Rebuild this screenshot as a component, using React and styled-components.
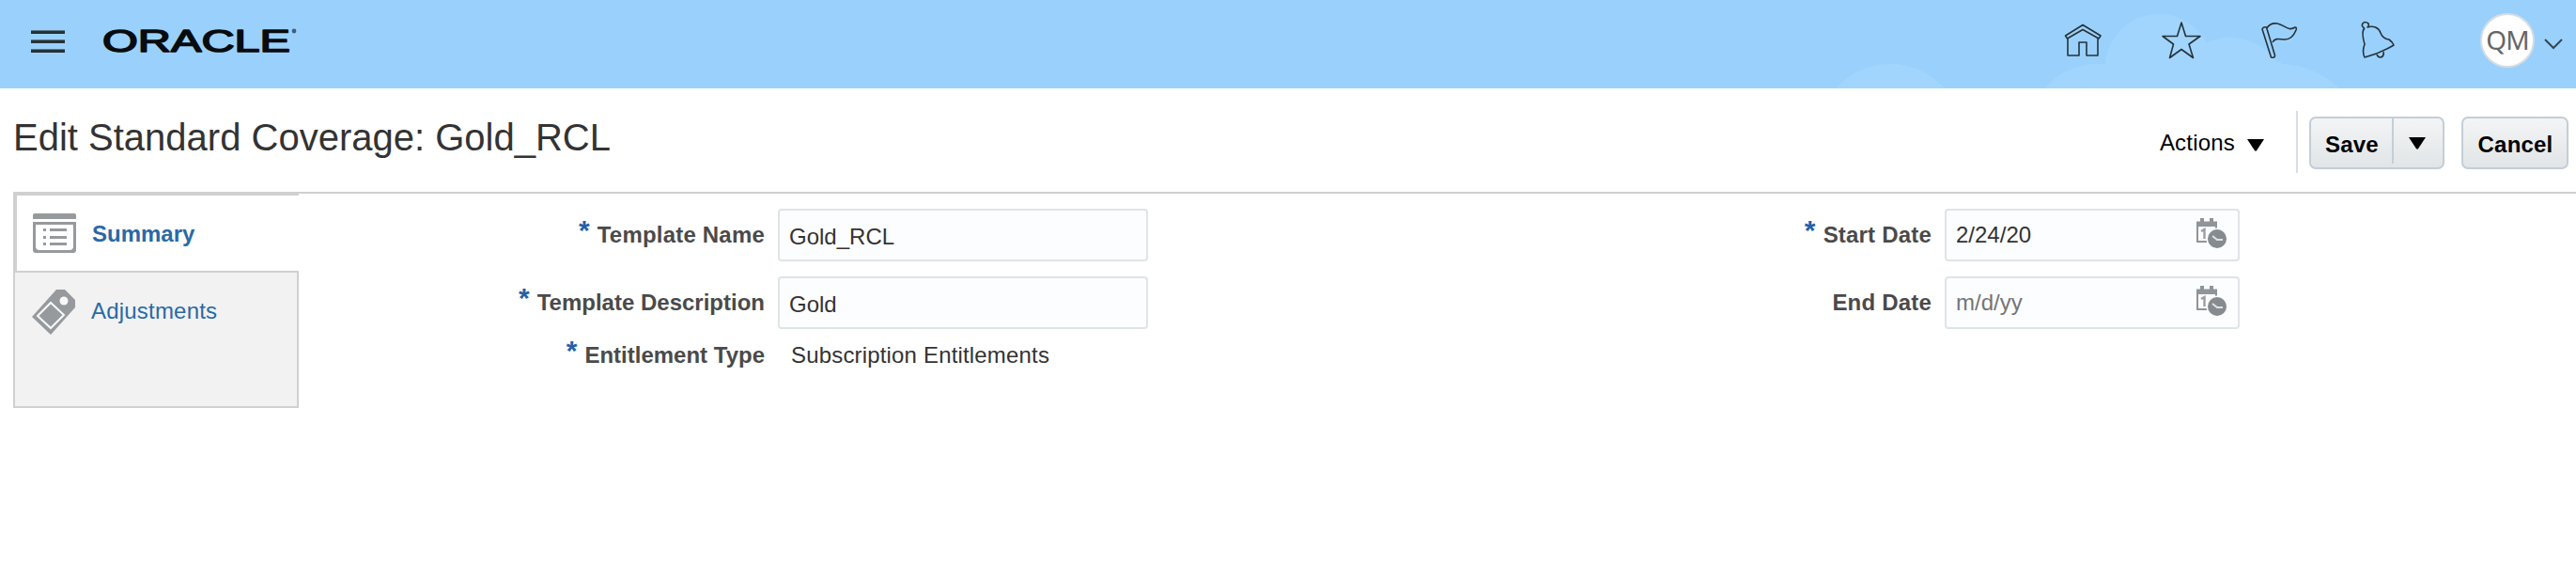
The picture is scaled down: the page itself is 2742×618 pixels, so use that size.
import React from "react";
import styled, { createGlobalStyle } from "styled-components";

const GlobalStyle = createGlobalStyle`
  * { box-sizing: border-box; }
  body {
    margin: 0;
    background: #fff;
    font-family: "Liberation Sans", Arial, sans-serif;
    font-size: 24px;
    color: #333;
  }
`;

const Page = styled.div`
  height: 618px;
  overflow: hidden;
`;

const TopBar = styled.header`
  position: relative;
  height: 94px;
  display: flex;
  align-items: flex-start;
  background: #9ad1fc;
  overflow: hidden;
`;

const Clouds = styled.svg`
  position: absolute;
  left: 1900px;
  top: 0;
`;

const MenuButton = styled.button`
  margin: 32px 0 0 33px;
  padding: 0;
  width: 36px;
  height: 24px;
  border: 0;
  background: none;
  display: flex;
  flex-direction: column;
  justify-content: space-between;
`;

const MenuLine = styled.span`
  width: 36px;
  height: 4px;
  background: #283136;
  border-top: 1px solid #587585;
`;

const Logo = styled.svg`
  margin: 24px 0 0 39px;
  flex: none;
`;

const IconBar = styled.nav`
  margin-left: auto;
  display: flex;
  align-items: flex-start;
  position: relative;
`;

const IconSlot = styled.svg`
  width: 44px;
  height: 44px;
  margin: 20px 60px 0 0;
  fill: none;
  stroke: #263238;
  stroke-width: 1.6;
  stroke-linejoin: round;
`;

const Avatar = styled.div`
  width: 58px;
  height: 58px;
  margin: 14px 10px 0 29px;
  border: 2px solid #d5dde3;
  border-radius: 50%;
  background: #fff;
  color: #666;
  font: 28px/53px "Noto Sans", "Open Sans", sans-serif;
  letter-spacing: -1px;
  text-align: center;
`;

const Chevron = styled.svg`
  margin: 40px 14px 0 0;
`;

const TitleRow = styled.div`
  height: 110px;
  display: flex;
  align-items: flex-start;
`;

const Title = styled.h1`
  margin: 29px auto 0 14px;
  font-size: 40px;
  line-height: 46px;
  font-weight: 400;
  white-space: nowrap;
`;

const ActionsMenu = styled.div`
  display: flex;
  align-items: flex-start;
  height: 30px;
  line-height: 30px;
  margin: 43px 34px 0 0;
  color: #000;
  letter-spacing: 0.2px;
`;

const ActionsArrow = styled.span`
  padding: 11px 0 0 13px;
`;

const TriangleDown = styled.svg`
  display: block;
`;

const Separator = styled.div`
  width: 2px;
  height: 66px;
  margin: 24px 12px 0 0;
  background: #d6dfe6;
`;

const Button = styled.div`
  display: flex;
  height: 56px;
  width: ${(p) => p.$width}px;
  margin: 30px ${(p) => p.$after}px 0 0;
  border: 2px solid #c4ced7;
  border-radius: 7px;
  background: linear-gradient(#f3f4f5, #e1e5e7);
  color: #000;
  font-weight: 700;
  line-height: 55px;
  letter-spacing: 0.2px;
`;

const ButtonText = styled.span`
  flex: 1;
  padding-left: 1px;
  text-align: center;
`;

const ButtonArrow = styled.span`
  width: 54px;
  height: 48px;
  border-left: 2px solid #c4ced7;
  display: flex;
  justify-content: center;
  padding: 20px 2px 0 0;
`;

const Body = styled.main`
  display: flex;
  margin-left: 14px;
  border-top: 2px solid #d0d0d0;
`;

const SideTabs = styled.aside`
  width: 304px;
  height: 228px;
  border: 2px solid #d0d0d0;
  border-top: 0;
  border-right: 0;
  background: #f2f2f2;
  display: flex;
  flex-direction: column;
`;

const Tab = styled.div`
  display: flex;
  align-items: flex-start;
  height: ${(p) => (p.$active ? 82 : 144)}px;
  padding-left: ${(p) => (p.$active ? 17 : 18)}px;
  color: #2a69a5;
  font-weight: ${(p) => (p.$active ? 700 : 400)};
  letter-spacing: ${(p) => (p.$active ? 0 : 0.2)}px;
  background: ${(p) => (p.$active ? "#fff" : "#f2f2f2")};
  border-style: solid;
  border-color: #d0d0d0;
  border-width: ${(p) => (p.$active ? "2px 0 0 2px" : "2px 2px 0 0")};
`;

const TabIcon = styled.svg`
  margin: ${(p) => p.$top}px 17px 0 0;
  flex: none;
`;

const TabLabel = styled.span`
  line-height: 28px;
  margin-top: 27px;
`;

const FieldColumn = styled.section`
  width: ${(p) => p.$width}px;
  padding-top: 16px;
`;

const FieldRow = styled.div`
  display: flex;
  height: ${(p) => p.$height}px;
`;

const Label = styled.label`
  width: ${(p) => p.$width}px;
  display: flex;
  justify-content: flex-end;
  margin-top: ${(p) => p.$top}px;
  line-height: 28px;
  font-weight: 700;
  color: #4a4a4a;
  white-space: nowrap;
  letter-spacing: ${(p) => p.$spacing || 0}px;
`;

const Star = styled.span`
  color: #2360a8;
  font: 700 30px/28px "Liberation Sans", Arial, sans-serif;
  margin: -5px 8px 0 0;
`;

const Field = styled.div`
  width: ${(p) => p.$width}px;
  height: 56px;
  margin-left: 14px;
  display: flex;
  justify-content: space-between;
  border: 2px solid #dfe4e7;
  border-radius: 4px;
  background: #fcfdff;
  padding: ${(p) => p.$top}px 12px 0 10px;
  line-height: 28px;
  color: ${(p) => (p.$muted ? "#757575" : "#333")};
`;

const PlainValue = styled.div`
  margin: 0 0 0 28px;
  line-height: 28px;
  letter-spacing: 0.17px;
`;

const CalendarSvg = styled.svg`
  margin-top: -4px;
`;

const CalendarIcon = () => (
  <CalendarSvg width="32" height="32" viewBox="0 0 32 32">
    <path d="M0 3.500h4V0h4v3.500h6V0h4v3.500h4V9H0z" fill="#8f9498" />
    <path d="M1 9v16h10M21 9v3" fill="none" stroke="#8f9498" strokeWidth="2" />
    <path d="M5 14l3.500-2v10" fill="none" stroke="#9a9ea2" strokeWidth="2.4" />
    <circle cx="22" cy="22" r="11.500" fill="#fcfdff" />
    <circle cx="22" cy="22" r="10" fill="#868b90" />
    <path d="M17 19l5 4h6" fill="none" stroke="#dfe2e5" strokeWidth="2" />
  </CalendarSvg>
);

const Arrow = () => (
  <TriangleDown width="18" height="13" viewBox="0 0 18 13">
    <path d="M0 0h18L9.800 12.500H8.200z" fill="#000" />
  </TriangleDown>
);

const TextField = ({ label, value, height, spacing }) => (
  <FieldRow $height={height}>
    <Label $width={496} $top={14} $spacing={spacing}>
      <Star>*</Star>
      {label}
    </Label>
    <Field $width={394} $top={14}>{value}</Field>
  </FieldRow>
);

const DateField = ({ label, value, required, muted }) => (
  <FieldRow $height={72}>
    <Label $width={300} $top={14} $spacing={0.2}>
      {required && <Star>*</Star>}
      {label}
    </Label>
    <Field $width={314} $top={12} $muted={muted}>
      {value}
      <CalendarIcon />
    </Field>
  </FieldRow>
);

export default function App() {
  return (
    <Page>
      <GlobalStyle />
      <TopBar>
        <Clouds width="842" height="94" viewBox="0 0 842 94">
          <g fill="#a1d5fd">
            <circle cx="112" cy="145" r="77" />
            <circle cx="398" cy="72" r="57" />
            <circle cx="474" cy="101" r="61" />
            <circle cx="332" cy="140" r="72" />
            <circle cx="526" cy="160" r="92" />
            <path d="M343 66h185v28H320z" />
          </g>
        </Clouds>
        <MenuButton aria-label="Menu">
          <MenuLine />
          <MenuLine />
          <MenuLine />
        </MenuButton>
        <Logo width="212" height="40" viewBox="0 0 212 40">
          <text
            x="1"
            y="31"
            fontFamily="Liberation Sans, Arial, sans-serif"
            fontSize="34"
            textLength="200"
            lengthAdjust="spacingAndGlyphs"
            fill="#080c0f"
            stroke="#080c0f"
            strokeWidth="1.6"
            strokeLinejoin="round"
          >
            ORACLE
          </text>
          <circle cx="205" cy="9" r="2.4" fill="#3f6076" />
        </Logo>
        <IconBar>
          <IconSlot viewBox="0 0 44 44">
            <path d="M3.500 18L22 6.500 41 18l-2 3L22 11.500 5.500 21zM6 21v18h12V25h8v14h12V21" />
          </IconSlot>
          <IconSlot viewBox="0 0 44 44">
            <path d="M23 4l4.500 14.500H43L31 27l4.500 14.500L23 32.500 10.500 41.500 14.500 27 3 18.500h15.500z" />
          </IconSlot>
          <IconSlot viewBox="0 0 44 44">
            <path d="M5 11q1-3 4.500-2l9 30q0 3-4 2zM10 10q3-6 11-5c7 1 12 9 19 4q2 0 1 3-4 10-12 10c-8-1-11-1-13 3" />
          </IconSlot>
          <IconSlot viewBox="0 0 44 44">
            <path d="M10 10q-4-2-2-5t6 0q1 3-1 4c6-2 12 0 14 6q2 6 9 7 4 3 5 6-15 9-31 13-3-6 0-14Q6 13 10 10M23 38q1 3 4 3 4-1 3-6" />
          </IconSlot>
          <Avatar>QM</Avatar>
          <Chevron width="20" height="14" viewBox="0 0 20 14">
            <path d="M1 2l9 9 9-9" fill="none" stroke="#35464f" strokeWidth="2" />
          </Chevron>
        </IconBar>
      </TopBar>
      <TitleRow>
        <Title>Edit Standard Coverage: Gold_RCL</Title>
        <ActionsMenu>
          Actions
          <ActionsArrow>
            <Arrow />
          </ActionsArrow>
        </ActionsMenu>
        <Separator />
        <Button $width={144} $after={18}>
          <ButtonText>Save</ButtonText>
          <ButtonArrow>
            <Arrow />
          </ButtonArrow>
        </Button>
        <Button $width={114} $after={8}>
          <ButtonText>Cancel</ButtonText>
        </Button>
      </TitleRow>
      <Body>
        <SideTabs>
          <Tab $active>
            <TabIcon $top={19} width="46" height="42" viewBox="0 0 46 42">
              <g fill="#969a9d">
                <path d="M0 6V2q0-2 2-2h42q2 0 2 2v4z" />
                <path d="M0 9h46v30q0 3-3 3H3q-3 0-3-3zM3 12v23q0 4 4 4h32q4 0 4-4V12z" fillRule="evenodd" />
                <path d="M11 16h3v3h-3zM11 24h3v3h-3zM11 31h3v3h-3zM18 16h18v3H18zM18 24h18v3H18zM18 31h18v3H18z" />
              </g>
            </TabIcon>
            <TabLabel>Summary</TabLabel>
          </Tab>
          <Tab>
            <TabIcon $top={18} width="46" height="48" viewBox="0 0 46 48">
              <path d="M0 29L26 0h9l11 11v8L20 48z" fill="#969a9d" />
              <circle cx="34" cy="12" r="4.500" fill="#f8f8f8" />
              <path d="M6 28L20 14l14 13-14 14z" fill="none" stroke="#f8f8f8" strokeWidth="2" />
            </TabIcon>
            <TabLabel>Adjustments</TabLabel>
          </Tab>
        </SideTabs>
        <FieldColumn $width={1438}>
          <TextField label="Template Name" value="Gold_RCL" height={72} spacing={0.2} />
          <TextField label="Template Description" value="Gold" height={70} />
          <FieldRow $height={40}>
            <Label $width={496} $top={0}>
              <Star>*</Star>
              Entitlement Type
            </Label>
            <PlainValue>Subscription Entitlements</PlainValue>
          </FieldRow>
        </FieldColumn>
        <FieldColumn $width={640}>
          <DateField label="Start Date" value="2/24/20" required />
          <DateField label="End Date" value="m/d/yy" muted />
        </FieldColumn>
      </Body>
    </Page>
  );
}
